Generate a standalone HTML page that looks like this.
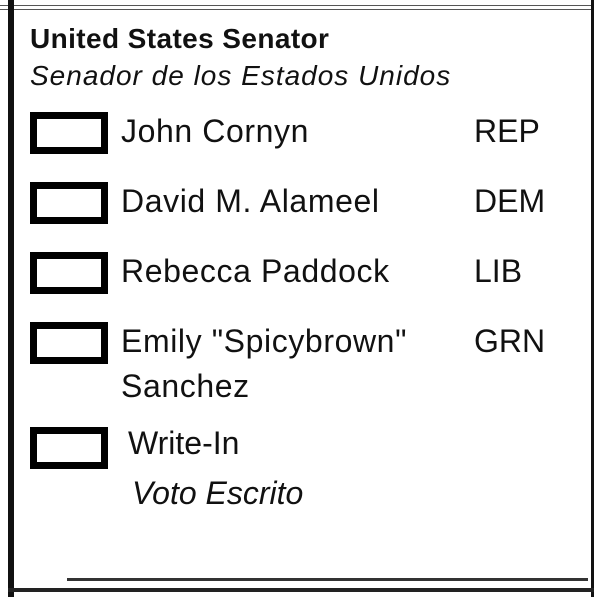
<!DOCTYPE html>
<html><head><style>
body{margin:0;width:599px;height:597px;background:#fff;position:relative;overflow:hidden;font-family:"Liberation Sans",Arial,sans-serif;color:#111}
div{position:absolute}
.t{white-space:nowrap;line-height:1}
.box{left:30px;width:64px;height:28px;border:7px solid #000}
.n{left:121px;font-size:32px;letter-spacing:0.6px}
.p{left:474px;font-size:32px}
</style></head><body>
<div style="left:0;top:5px;width:594px;height:3px;border-top:1px solid #555;border-bottom:1px solid #555"></div>
<div style="left:8px;top:0;width:6px;height:597px;background:#111"></div>
<div style="left:591px;top:0;width:3px;height:597px;background:#111"></div>
<div style="left:8px;top:588px;width:586px;height:4px;background:#222"></div>
<div style="left:67px;top:578px;width:521px;height:3px;background:#333"></div>
<div class="t" style="left:30px;top:25px;font-size:28px;font-weight:bold;letter-spacing:0.4px">United States Senator</div>
<div class="t" style="left:30px;top:62px;font-size:28px;font-style:italic;letter-spacing:1px">Senador de los Estados Unidos</div>
<div class="box" style="top:112px"></div>
<div class="t n" style="top:115px">John Cornyn</div><div class="t p" style="top:115px">REP</div>
<div class="box" style="top:182px"></div>
<div class="t n" style="top:185px">David M. Alameel</div><div class="t p" style="top:185px">DEM</div>
<div class="box" style="top:252px"></div>
<div class="t n" style="top:255px">Rebecca Paddock</div><div class="t p" style="top:255px">LIB</div>
<div class="box" style="top:322px"></div>
<div class="t n" style="top:325px">Emily "Spicybrown"</div><div class="t p" style="top:325px">GRN</div>
<div class="t n" style="top:370px">Sanchez</div>
<div class="box" style="top:427px"></div>
<div class="t" style="left:128px;top:427px;font-size:32px">Write-In</div>
<div class="t" style="left:132px;top:477px;font-size:32px;font-style:italic">Voto Escrito</div>
</body></html>
